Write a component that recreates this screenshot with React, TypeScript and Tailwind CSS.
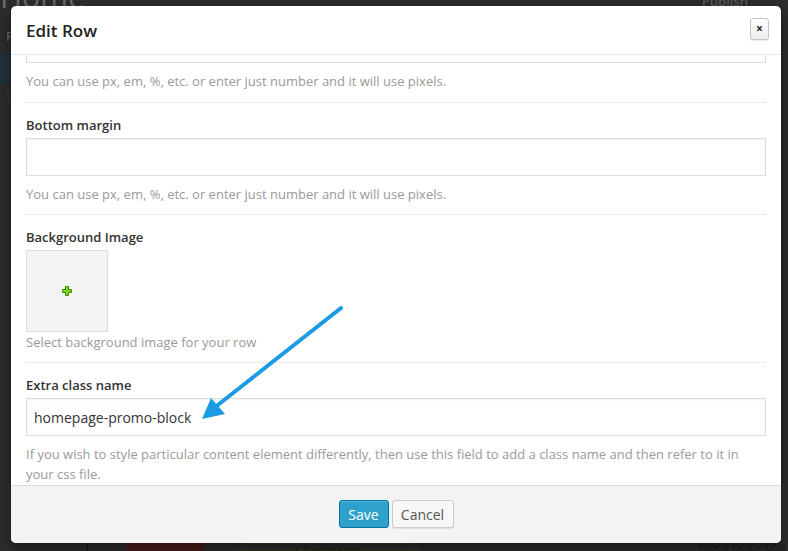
import React from "react";

const font = { fontFamily: '"Open Sans", "DejaVu Sans", sans-serif' };

function Help({ children }: { children: React.ReactNode }) {
  return <p className="text-[13px] leading-[20px] text-[#9a9a9a]">{children}</p>;
}

function Label({ children }: { children: React.ReactNode }) {
  return <div className="text-[13px] leading-[18px] font-semibold text-[#333] mb-[4px]">{children}</div>;
}

function Input({ value }: { value?: string }) {
  return (
    <div className="h-[38px] border border-[#dddddd] bg-white shadow-[inset_0_1px_2px_rgba(0,0,0,0.05)] flex items-center pl-[7px] text-[14px] text-[#333]">
      {value}
    </div>
  );
}

export default function App() {
  return (
    <div className="relative w-[788px] h-[551px] overflow-hidden bg-[#2d2d2d]" style={font}>
      {/* dimmed page behind */}
      <div className="flex flex-col h-full">
        <div className="flex justify-between h-[20px]">
          <div className="text-[30px] leading-[30px] -mt-[18px] text-[#6b6b6b] pl-0">Home</div>
          <div className="text-[13px] font-semibold text-[#5a5a5a] -mt-[8px] pr-[40px]">Publish</div>
        </div>
        <div className="flex flex-col w-[11px] mt-[8px]">
          <div className="h-[26px] text-[12px] text-[#6a6a6a] font-semibold pl-[6px]">P</div>
          <div className="h-[30px] bg-[#23323a]" />
          <div className="h-[30px] text-[16px] font-semibold text-[#3a3a3a] pl-[6px]">W</div>
        </div>
        <div className="flex-1" />
        <div className="flex items-end h-[8px] text-[11px] leading-[8px]">
          <div className="w-[88px] h-full border-r border-[#1a1a1a]" />
          <div className="ml-[38px] w-[78px] h-full bg-[#4a1c1c]" />
          <div className="ml-[35px] w-[182px] h-full rounded-t-full border border-[#3a3722] text-center text-[#1e1e1e] pt-[2px]">Charlottenbu</div>
          <div className="flex-1" />
          <div className="text-[#1e1e1e] text-[12px] pr-[2px]">Need help? Use</div>
        </div>
      </div>

      {/* modal */}
      <div className="absolute left-[11px] top-[6px] w-[770px] h-[537px] bg-white rounded-[5px] flex flex-col overflow-hidden shadow-[0_5px_15px_rgba(0,0,0,0.5)]">
        <div className="h-[49px] shrink-0 border-b border-[#e5e5e5] flex items-center justify-between pl-[15px] pr-[12px]">
          <h1 className="text-[17px] font-semibold text-[#222] leading-[24px] mt-[2px]">Edit Row</h1>
          <button className="w-[19px] h-[22px] rounded-[3px] border border-[#c4c4c4] bg-gradient-to-b from-white to-[#ececec] flex items-center justify-center text-[12px] font-bold text-[#222] leading-none shadow-[0_1px_0_rgba(0,0,0,0.08)] -mt-[3px]">
            ×
          </button>
        </div>

        <div className="flex-1 overflow-hidden px-[15px]">
          <div className="-mt-[30px]">
            <div className="pb-[11px] border-b border-dotted border-[#dddddd]">
              <Input />
              <div className="mt-[8px]">
                <Help>You can use px, em, %, etc. or enter just number and it will use pixels.</Help>
              </div>
            </div>
            <div className="pt-[13px] pb-[10px] border-b border-dotted border-[#dddddd]">
              <Label>Bottom margin</Label>
              <Input />
              <div className="mt-[8px]">
                <Help>You can use px, em, %, etc. or enter just number and it will use pixels.</Help>
              </div>
            </div>
            <div className="pt-[13px] pb-[10px] border-b border-dotted border-[#dddddd]">
              <Label>Background Image</Label>
              <div className="w-[82px] h-[82px] bg-[#f3f3f3] border border-[#dddddd] flex items-center justify-center">
                <svg width="10" height="10" viewBox="0 0 10 10">
                  <path d="M3.5 0.5h3v3h3v3h-3v3h-3v-3h-3v-3h3z" fill="#7ed321" stroke="#3c8c00" strokeWidth="1" />
                </svg>
              </div>
              <Help>Select background image for your row</Help>
            </div>
            <div className="pt-[13px]">
              <Label>Extra class name</Label>
              <Input value="homepage-promo-block" />
              <div className="mt-[8px]">
                <Help>
                  If you wish to style particular content element differently, then use this field to add a class name and then refer to it in your css file.
                </Help>
              </div>
            </div>
          </div>
        </div>

        <div className="h-[58px] shrink-0 border-t border-[#dddddd] bg-[#f3f3f3] flex items-center justify-center gap-[3px] pb-[1px]">
          <button className="h-[28px] w-[50px] rounded-[3px] bg-[#2ea2cc] border border-[#0074a2] text-white text-[14px] shadow-[inset_0_1px_0_rgba(120,200,230,0.5)]">
            Save
          </button>
          <button className="h-[28px] w-[62px] rounded-[3px] bg-[#f7f7f7] border border-[#cccccc] text-[#555] text-[14px] shadow-[0_1px_0_rgba(0,0,0,0.08)]">
            Cancel
          </button>
        </div>
      </div>

      {/* annotation arrow */}
      <svg className="absolute left-0 top-0 pointer-events-none" width="788" height="551">
        <line x1="341" y1="308" x2="214" y2="408" stroke="#1a9be3" strokeWidth="4" strokeLinecap="round" />
        <polygon points="202,419 211,398 225,414" fill="#1a9be3" />
      </svg>
    </div>
  );
}
